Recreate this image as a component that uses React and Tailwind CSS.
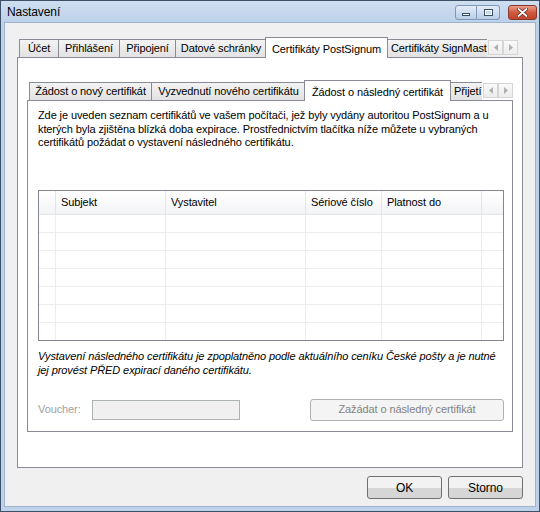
import React from 'react';

const outerTabs = [
  { label: 'Účet', w: 'w-[40px]' },
  { label: 'Přihlášení', w: 'w-[62px]' },
  { label: 'Připojení', w: 'w-[57px]' },
  { label: 'Datové schránky', w: 'w-[92px]' },
];

const innerTabs = [
  { label: 'Žádost o nový certifikát', w: 'w-[123px]' },
  { label: 'Vyzvednutí nového certifikátu', w: 'w-[155px]' },
];

const Tab = ({ label, w }) => (
  <div
    className={`${w} h-[18px] shrink-0 flex items-center justify-center border border-b-0 border-[#898c95] -ml-px first:ml-0 bg-gradient-to-b from-[#f3f3f3] to-[#e2e2e2] whitespace-nowrap`}
  >
    {label}
  </div>
);

const SelectedTab = ({ label, w }) => (
  <div
    className={`${w} h-[21px] shrink-0 -mx-[2px] -mb-px relative z-10 flex items-start justify-center pt-[3px] border border-b-0 border-[#898c95] bg-white whitespace-nowrap`}
  >
    {label}
  </div>
);

// tab that runs under the scroll arrows, so its text is cut off
const ClippedTab = ({ label, w }) => (
  <div className={`${w} h-[18px] shrink-0 overflow-hidden -ml-px`}>
    <div className="w-[140px] h-[18px] flex items-center pl-[5px] border border-b-0 border-[#898c95] bg-gradient-to-b from-[#f3f3f3] to-[#e2e2e2] whitespace-nowrap">
      {label}
    </div>
  </div>
);

const Arrow = ({ dir }) => (
  <div className="w-[15px] h-[15px] flex items-center justify-center border border-[#d5d5d5] bg-gradient-to-b from-[#fafafa] to-[#ececec]">
    <svg width="4" height="7" viewBox="0 0 4 7">
      {dir === 'left' ? (
        <path d="M4 0 L0 3.5 L4 7 Z" fill="#b0b0b0" />
      ) : (
        <path d="M0 0 L4 3.5 L0 7 Z" fill="#b0b0b0" />
      )}
    </svg>
  </div>
);

const Arrows = () => (
  <div className="flex items-center self-end mb-[2px] ml-px">
    <Arrow dir="left" />
    <Arrow dir="right" />
  </div>
);

const CaptionButtons = () => (
  <div className="flex items-center gap-[8px]">
    <div className="flex">
      <div className="w-[22px] h-[15px] rounded-l-[3px] border border-[#8197b6] bg-gradient-to-b from-[#e4edf8] to-[#b9cde6] flex items-end justify-center pb-[3px]">
        <div className="w-[8px] h-[3px] bg-white border border-[#3b4d66]" />
      </div>
      <div className="w-[23px] h-[15px] rounded-r-[3px] border border-l-0 border-[#8197b6] bg-gradient-to-b from-[#e4edf8] to-[#b9cde6] flex items-center justify-center">
        <div className="w-[9px] h-[7px] border border-[#3b4d66] bg-white flex items-center justify-center">
          <div className="w-[5px] h-[3px] bg-[#c9d8ea]" />
        </div>
      </div>
    </div>
    <div className="w-[29px] h-[15px] rounded-[3px] border border-[#8a3a2a] bg-gradient-to-b from-[#e8a08d] via-[#d0583c] to-[#c0442b] flex items-center justify-center">
      <svg width="11" height="9" viewBox="0 0 11 9">
        <path d="M1.5 1 L9.5 8 M9.5 1 L1.5 8" stroke="#5a2218" strokeWidth="3.2" strokeLinecap="round" />
        <path d="M1.5 1 L9.5 8 M9.5 1 L1.5 8" stroke="#ffffff" strokeWidth="1.8" strokeLinecap="round" />
      </svg>
    </div>
  </div>
);

const cols = ['Subjekt', 'Vystavitel', 'Sériové číslo', 'Platnost do'];
const colW = ['w-[110px]', 'w-[140px]', 'w-[76px]', 'w-[100px]'];

const Grid = () => (
  <div className="w-[466px] h-[151px] border border-[#828790] bg-white overflow-hidden">
    <div className="h-[24px] flex border-b border-[#e3e5e8] bg-gradient-to-b from-[#ffffff] to-[#f3f4f6]">
      <div className="w-[17px] shrink-0 border-r border-[#e3e5e8]" />
      {cols.map((c, i) => (
        <div
          key={c}
          className={`${colW[i]} shrink-0 flex items-center pl-[5px] border-r border-[#e3e5e8] whitespace-nowrap`}
        >
          {c}
        </div>
      ))}
      <div className="flex-1" />
    </div>
    {Array.from({ length: 7 }).map((_, r) => (
      <div key={r} className="h-[18px] flex border-b border-[#ececec]">
        <div className="w-[17px] shrink-0 border-r border-[#ececec]" />
        {colW.map((w, i) => (
          <div key={i} className={`${w} shrink-0 border-r border-[#ececec]`} />
        ))}
        <div className="flex-1" />
      </div>
    ))}
  </div>
);

const Button = ({ children, className = '' }) => (
  <div
    className={`h-[23px] flex items-center justify-center rounded-[3px] border border-[#707070] bg-gradient-to-b from-[#f2f2f2] from-50% to-[#d6d6d6] to-50% text-[12px] ${className}`}
  >
    {children}
  </div>
);

export default function App() {
  return (
    <div className="w-[540px] h-[512px] flex flex-col bg-[#bfd2ea] border border-[#3c5068] font-['Liberation_Sans',Arial,sans-serif] text-[11px] tracking-[-0.1px] text-black overflow-hidden select-none">
      {/* Title bar */}
      <div className="h-[21px] shrink-0 flex items-start justify-between pl-[6px] pr-[2px] bg-gradient-to-b from-[#cfdff1] to-[#bdd1ea]">
        <span className="text-[12px] leading-[21px] mt-[1px]">Nastavení</span>
        <div className="pt-[4px]">
          <CaptionButtons />
        </div>
      </div>

      {/* Client area */}
      <div className="flex-1 mx-[3px] mb-[4px] flex flex-col px-[12px] pt-[13px] bg-[#f0f0f0] border border-[#9fb3cc]">
        {/* Outer tabs */}
        <div className="h-[21px] flex items-end pl-[2px]">
          {outerTabs.map((t) => (
            <Tab key={t.label} {...t} />
          ))}
          <SelectedTab label="Certifikáty PostSignum" w="w-[123px]" />
          <ClippedTab label="Certifikáty SignMaster" w="w-[102px]" />
          <Arrows />
        </div>

        <div className="h-[411px] border border-[#898c95] bg-white pt-[21px] pl-[9px]">
          {/* Inner tabs */}
          <div className="h-[21px] flex items-end pl-[2px]">
            {innerTabs.map((t) => (
              <Tab key={t.label} {...t} />
            ))}
            <SelectedTab label="Žádost o následný certifikát" w="w-[147px]" />
            <ClippedTab label="Přijetí" w="w-[34px]" />
            <Arrows />
          </div>

          <div className="w-[486px] h-[332px] border border-[#898c95] bg-white pl-[10px] pt-[8px]">
            <p className="leading-[13.5px]">
              Zde je uveden seznam certifikátů ve vašem počítači, jež byly vydány autoritou PostSignum a u
              <br />
              kterých byla zjištěna blízká doba expirace. Prostřednictvím tlačítka níže můžete u vybraných
              <br />
              certifikátů požádat o vystavení následného certifikátu.
            </p>

            <div className="mt-[40px]">
              <Grid />
            </div>

            <p className="mt-[8px] italic leading-[14px]">
              Vystavení následného certifikátu je zpoplatněno podle aktuálního ceníku České pošty a je nutné
              <br />
              jej provést PŘED expirací daného certifikátu.
            </p>

            <div className="mt-[22px] flex items-center w-[466px]">
              <span className="w-[54px] text-[#a0a0a0]">Voucher:</span>
              <div className="w-[148px] h-[20px] border border-[#adb2b5] bg-[#f0f0f0]" />
              <div className="ml-auto w-[194px] h-[22px] flex items-center justify-center rounded-[3px] border border-[#adb2b5] bg-[#f4f4f4] text-[#838383]">
                Zažádat o následný certifikát
              </div>
            </div>
          </div>
        </div>

        {/* Dialog buttons */}
        <div className="mt-[8px] flex justify-end gap-[6px]">
          <Button className="w-[75px]">OK</Button>
          <Button className="w-[75px]">Storno</Button>
        </div>
      </div>
    </div>
  );
}
